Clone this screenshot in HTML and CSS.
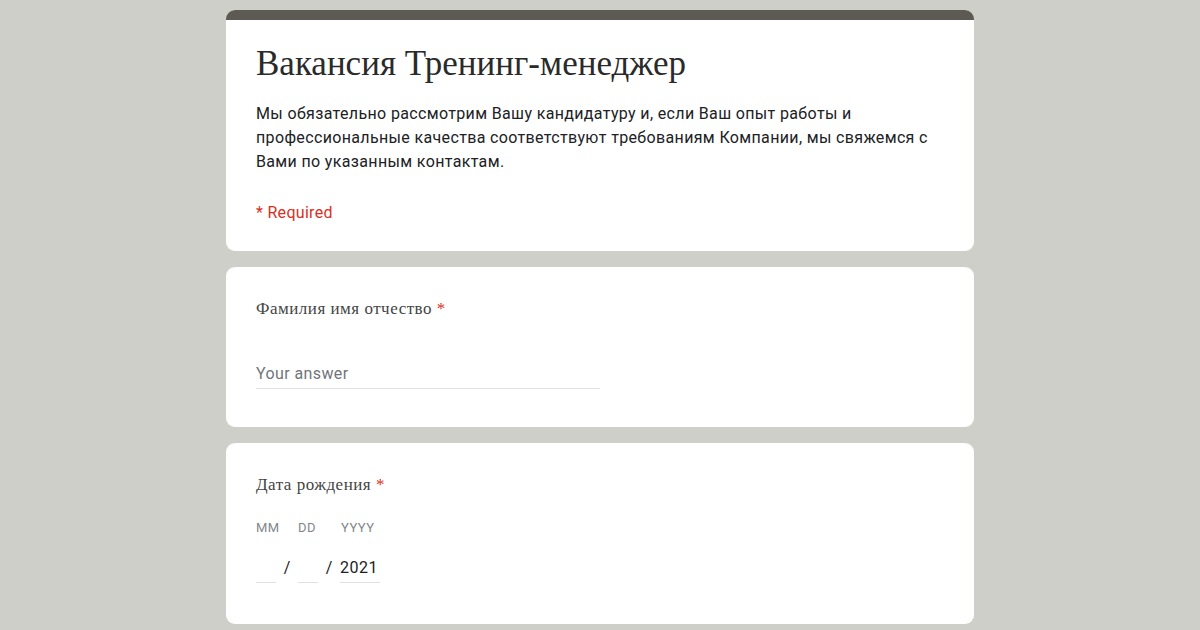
FILE: index.html
```html
<!DOCTYPE html>
<html lang="ru">
<head>
    <meta charset="UTF-8">
    <title>Вакансия Тренинг-менеджер</title>
    <link rel="stylesheet" href="styles.css">
</head>
<body>
    <div class="form-wrap">
        <!-- Header card -->
        <div class="card card-head">
            <div class="band"></div>
            <div class="head-body">
                <h1 class="form-title">Вакансия Тренинг-менеджер</h1>
                <p class="form-desc">Мы обязательно рассмотрим Вашу кандидатуру и, если Ваш опыт работы и профессиональные качества соответствуют требованиям Компании, мы свяжемся с Вами по указанным контактам.</p>
                <div class="required-note">* Required</div>
            </div>
        </div>

        <!-- Name -->
        <div class="card question">
            <div class="q-title">Фамилия имя отчество <span class="star">*</span></div>
            <div class="answer">Your answer</div>
        </div>

        <!-- Birth date -->
        <div class="card question question-date">
            <div class="q-title">Дата рождения <span class="star">*</span></div>
            <div class="date-labels">
                <span class="lbl-mm">MM</span>
                <span class="lbl-dd">DD</span>
                <span class="lbl-yy">YYYY</span>
            </div>
            <div class="date-row">
                <span class="date-box box-mm"></span>
                <span class="slash">/</span>
                <span class="date-box box-dd"></span>
                <span class="slash">/</span>
                <span class="date-box box-yy">2021</span>
            </div>
        </div>
    </div>
</body>
</html>
```

FILE: styles.css
```css
body {
    margin: 0;
    background-color: #cfcfca;
    font-family: 'Roboto', 'Liberation Sans', sans-serif;
    color: #202124;
}
.form-wrap {
    width: 748px;
    margin: 10px auto 0;
    display: flex;
    flex-direction: column;
    gap: 16px;
}
.card {
    background-color: #fff;
    border-radius: 9px;
    overflow: hidden;
}
.band {
    height: 10px;
    background-color: #5c5a53;
}
.head-body {
    padding: 22px 30px 26px;
}
.form-title {
    margin: 0;
    font-family: 'Liberation Serif', serif;
    font-weight: normal;
    font-size: 35px;
    line-height: 44px;
    color: #2a2a2a;
}
.form-desc {
    margin: 16px 0 0;
    font-size: 16px;
    line-height: 24px;
    letter-spacing: 0.35px;
}
.required-note {
    margin-top: 27px;
    color: #d93025;
    font-size: 16px;
    line-height: 24px;
    letter-spacing: 0.3px;
}
.question {
    padding: 30px 30px 38px;
}
.question-date {
    padding-bottom: 41px;
}
.q-title {
    font-family: 'Liberation Serif', serif;
    font-size: 17px;
    line-height: 24px;
    letter-spacing: 0.5px;
    color: #444;
}
.star {
    color: #d93025;
}
.answer {
    margin-top: 41px;
    width: 344px;
    padding-bottom: 2px;
    border-bottom: 1px solid #e0e0e0;
    color: #70757a;
    font-size: 16px;
    line-height: 24px;
    letter-spacing: 0.4px;
}
.date-labels {
    margin-top: 21px;
    display: flex;
    font-size: 13px;
    line-height: 20px;
    color: #80868b;
    letter-spacing: 0.5px;
}
.lbl-mm {
    width: 42px;
}
.lbl-dd {
    width: 43px;
}
.date-row {
    margin-top: 18px;
    display: flex;
    align-items: flex-end;
    font-size: 16px;
    line-height: 24px;
}
.date-box {
    height: 24px;
    padding-bottom: 2px;
    border-bottom: 1px solid #e0e0e0;
    letter-spacing: 0.5px;
}
.box-mm, .box-dd {
    width: 20px;
}
.box-yy {
    width: 40px;
}
.slash {
    width: 22px;
    text-align: center;
    padding-bottom: 3px;
}
```
